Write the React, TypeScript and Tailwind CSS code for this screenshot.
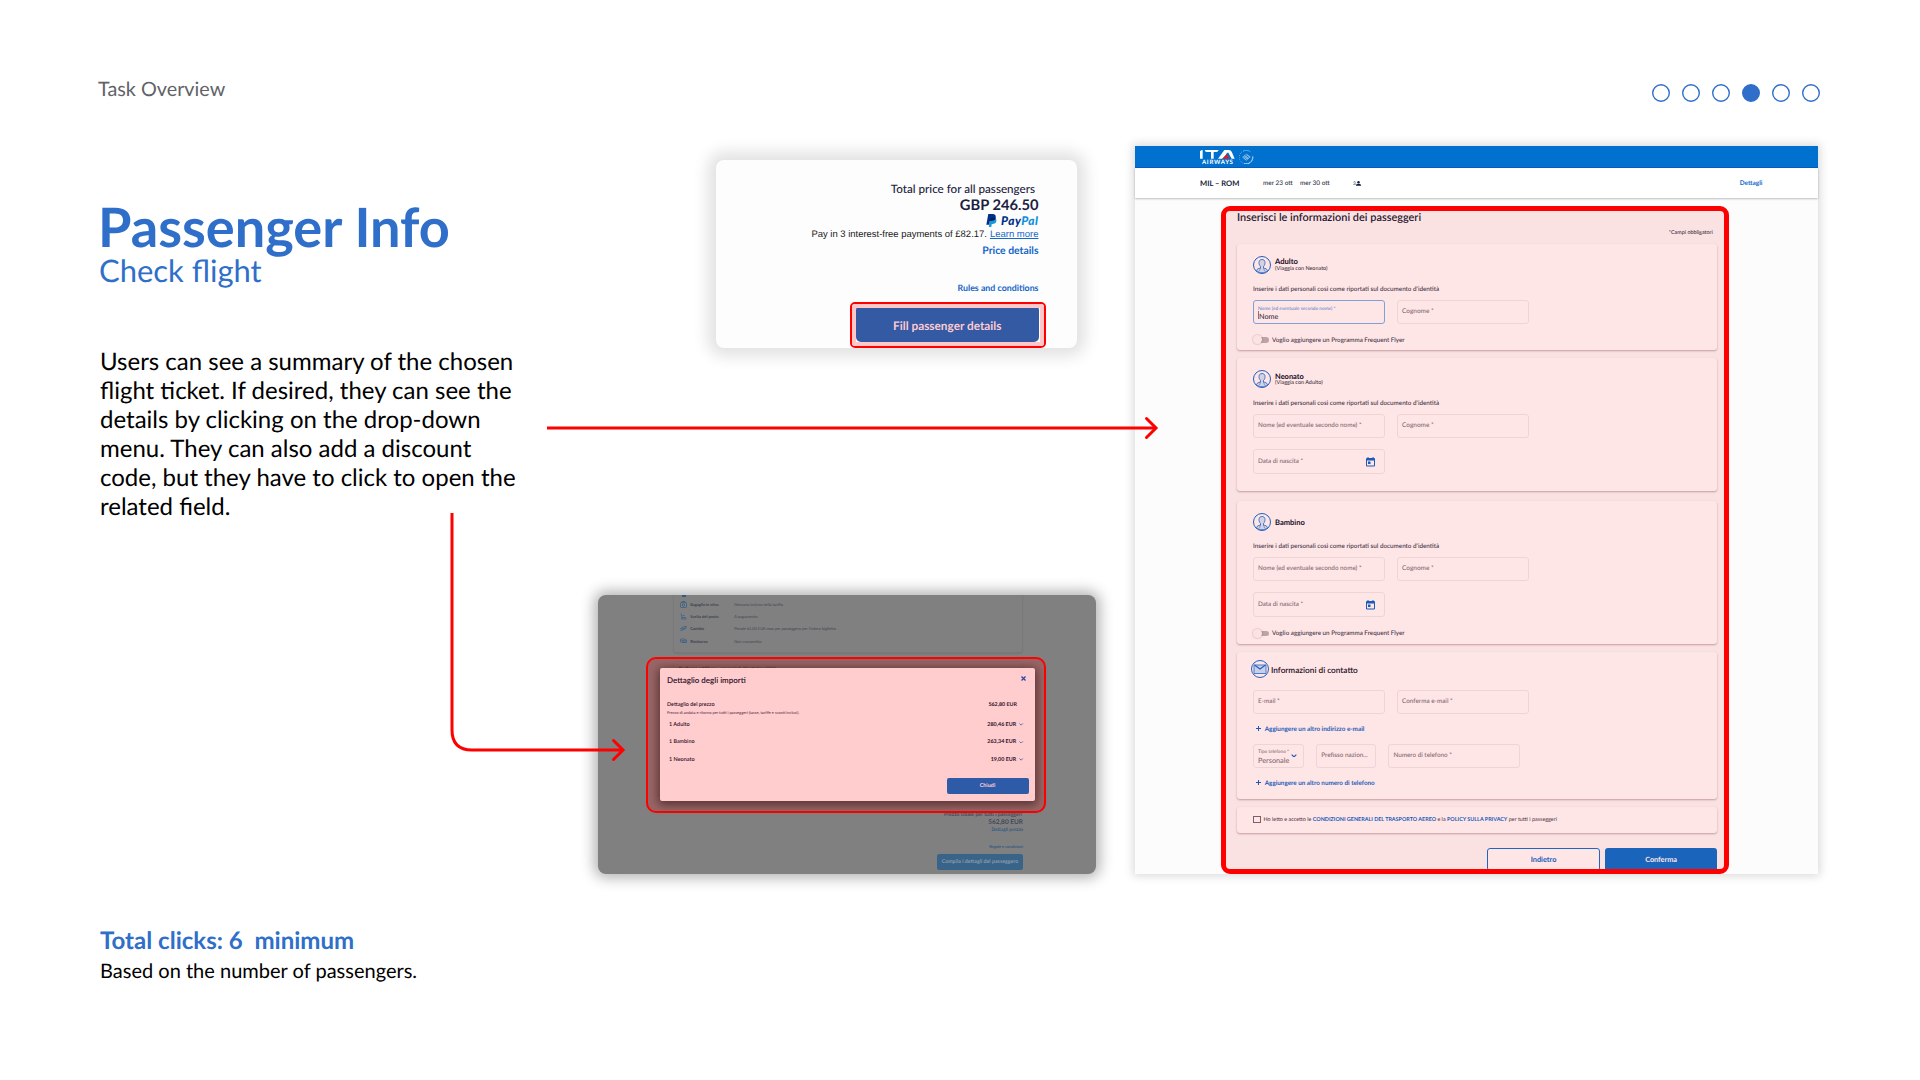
import { useLayoutEffect, useRef, useState } from "react";
import type { ReactNode } from "react";

/* Single line of text whose size is computed so that its glyphs span `w` pixels. */
function Fit({ w, className = "", children }: { w: number; className?: string; children: ReactNode }) {
  const ref = useRef<HTMLSpanElement>(null);
  const [size, setSize] = useState(100);
  useLayoutEffect(() => {
    const el = ref.current;
    if (!el) return;
    el.style.fontSize = "100px";
    const natural = el.getBoundingClientRect().width;
    const next = (w / (natural - 12)) * 100;
    el.style.fontSize = `${next}px`;
    setSize(next);
  }, [w]);
  return (
    <span ref={ref} className={`block w-max shrink-0 translate-y-px whitespace-pre leading-none ${className}`} style={{ fontSize: size }}>
      {children}
    </span>
  );
}

function Steps() {
  return (
    <div className="flex gap-3">
      {[1, 2, 3, 4, 5, 6].map((n) => (
        <svg key={n} viewBox="0 0 18 18" className="size-[18px]">
          <circle cx="9" cy="9" r="8.3" fill={n === 4 ? "#2f6fc9" : "none"} stroke="#2f6fc9" strokeWidth="1.4" />
        </svg>
      ))}
    </div>
  );
}

function PriceCard() {
  return (
    <section className="relative ml-[118px] mt-[14px] flex h-[188px] w-[361px] flex-col items-end rounded-[8px] bg-[#fdfdfd] pr-[38.5px] shadow-[0_0_16px_8px_rgba(0,0,0,0.12)]">
      <div className="mr-[3.5px] mt-[22px] flex h-[14px] items-center">
        <Fit w={143} className="font-medium text-[#1c2340]">Total price for all passengers</Fit>
      </div>
      <div className="flex h-[17px] items-center">
        <Fit w={77} className="font-bold text-[#1a2042]">GBP 246.50</Fit>
      </div>
      <div className="flex h-[14px] items-center gap-[4px]">
        <svg viewBox="0 0 20 24" className="h-[13px] w-[11px]">
          <path d="M8 7h6c4 0 5.5 2.500 5 6-.7 4-3.500 5.500-7 5.500h-1.500L9.500 24H5z" fill="#179bd7" />
          <path d="M4 0h8c4.500 0 6.500 2.500 5.800 6.500-.8 4.500-4 6-8 6H7L5.700 20H0.500z" fill="#003087" />
          <path d="M9 7h8.700c-.6 4-3.700 5.500-7.900 5.500H7z" fill="#001c64" />
        </svg>
        <Fit w={36} className="font-black italic tracking-[0.04em] text-[#003087]">
          Pay<span className="text-[#0e90dc]">Pal</span>
        </Fit>
      </div>
      <div className="flex h-[14px] items-center gap-[3px] font-['Liberation_Sans']">
        <Fit w={174.500} className="text-[#1a1a1a]">Pay in 3 interest-free payments of £82.17.</Fit>
        <Fit w={47.500} className="text-[#1769c9] underline underline-offset-[1px]">Learn more</Fit>
      </div>
      <div className="mt-[1px] flex h-[16px] items-center">
        <Fit w={55} className="font-bold text-[#1566c8]">Price details</Fit>
      </div>
      <div className="mt-[21.500px] flex h-[16px] items-center">
        <Fit w={80} className="font-bold text-[#1566c8]">Rules and conditions</Fit>
      </div>
      <div className="mt-[9.500px] flex h-[37px] w-[182.500px] items-center justify-center rounded-[5px] bg-[#355aa4] pt-[3px]">
        <Fit w={107} className="font-bold text-[#fbcbd2]">Fill passenger details</Fit>
      </div>
      <div className="absolute left-[134px] top-[142px] h-[46px] w-[196px] rounded-[5px] border-2 border-[#ff0000]">
        <div className="h-full rounded-[3px] shadow-[inset_0_0_0_4px_#ffc8c8]" />
      </div>
    </section>
  );
}

const fareRules = [
  { label: "Bagaglio in stiva", lw: 28, value: "Nessuno incluso nella tariffa", vw: 48.500, icon: <><rect x="1" y="3" width="12" height="10" rx="1.500" /><path d="M4.500 3V1h5v2" /><circle cx="7" cy="8" r="2.500" /></> },
  { label: "Scelta del posto", lw: 28, value: "A pagamento", vw: 23, icon: <><path d="M2 1l2 8h7l1 4M4 9l-1 3h8M5 5h4" /></> },
  { label: "Cambio", lw: 13.500, value: "Penale 65,00 EUR max per passeggero per l'intero biglietto", vw: 101.500, icon: <><path d="M1 8l4-4 8-1-4 4zM1 11l4-1 8-4" /></> },
  { label: "Rimborso", lw: 17, value: "Non consentito", vw: 27, icon: <><rect x="1" y="4" width="9" height="6" rx="1" /><path d="M10 6h3v5H4M3 7h5" /></> },
];

const fares = [
  { label: "1 Adulto", lw: 20, amount: "280,46 EUR", aw: 28.300 },
  { label: "1 Bambino", lw: 25, amount: "263,34 EUR", aw: 28.300 },
  { label: "1 Neonato", lw: 25, amount: "19,00 EUR", aw: 25 },
];

function Chevron({ className }: { className: string }) {
  return (
    <svg viewBox="0 0 10 6" className={className} fill="none" stroke="currentColor" strokeWidth="2">
      <path d="M1 1l4 4 4-4" />
    </svg>
  );
}

function AmountDialog() {
  return (
    <div className="absolute left-[62px] top-[73px] flex h-[133px] w-[375px] flex-col rounded-[2px] bg-[#ffcdcd] pl-[7px] pr-[6.500px] text-[#2d0f2a] shadow-[0_2px_10px_2px_rgba(30,0,0,0.5)]">
      <div className="mt-[5px] flex h-[11px] items-center justify-between pr-[2.500px]">
        <Fit w={78} className="font-semibold">Dettaglio degli importi</Fit>
        <svg viewBox="0 0 10 10" className="size-[5px]" fill="none" stroke="#2347a5" strokeWidth="2.400">
          <path d="M1 1l8 8M9 1l-8 8" />
        </svg>
      </div>
      <div className="mt-[16.500px] flex h-[8px] items-center justify-between pr-[11.500px]">
        <Fit w={47} className="font-semibold">Dettaglio del prezzo</Fit>
        <Fit w={28} className="font-bold">562,80 EUR</Fit>
      </div>
      <div className="-mt-[0.500px] flex h-[8px] items-center">
        <Fit w={132} className="font-medium text-[#5c3550]">Prezzo di andata e ritorno per tutti i passeggeri (tasse, tariffe e sconti inclusi).</Fit>
      </div>
      <div className="-mt-[0.500px] flex flex-col">
        {fares.map((f) => (
          <div key={f.label} className="flex h-[17.700px] items-center pl-[2px] pr-[5px]">
            <Fit w={f.lw} className="font-semibold">{f.label}</Fit>
            <Fit w={f.aw} className="ml-auto font-bold">{f.amount}</Fit>
            <Chevron className="ml-[3px] h-[2.600px] w-[4.300px] text-[#3f63b5]" />
          </div>
        ))}
      </div>
      <div className="ml-auto mt-[9.500px] flex h-[16px] w-[82px] items-center justify-center rounded-[2px] bg-[#2e5ba8]">
        <Fit w={15} className="font-bold text-[#ffcdd6]">Chiudi</Fit>
      </div>
    </div>
  );
}

function DialogCard() {
  return (
    <section className="relative mt-[247px] flex h-[279px] w-[498px] flex-col rounded-[8px] bg-[#808080] pl-[74.700px] pr-[73px] shadow-[0_0_14px_4px_rgba(0,0,0,0.3)]">
      <div className="flex h-[58px] w-[350px] flex-col rounded-b-[3px] border-x border-b border-[#7a7a7a] pl-[6.500px] pt-[3px] shadow-[0_1px_1px_#767676]">
        <div className="absolute left-[84px] top-0 h-[1.500px] w-[4px] bg-[#2f5d88]" />
        {fareRules.map((r) => (
          <div key={r.label} className="flex h-[12.200px] items-center">
            <svg viewBox="0 0 14 14" className="size-[7px]" fill="none" stroke="#24588a" strokeWidth="1.200">{r.icon}</svg>
            <div className="ml-[3px] w-[44px]">
              <Fit w={r.lw} className="font-bold text-[#3c4252]">{r.label}</Fit>
            </div>
            <Fit w={r.vw} className="font-medium text-[#484c56]">{r.value}</Fit>
          </div>
        ))}
      </div>
      <div className="mt-[8px] flex h-[12px] w-[350px] rounded-t-[3px] border-x border-t border-[#7a7a7a] pl-[5px] pt-[3px]">
        <Fit w={97} className="font-medium text-[#30303f]"><b>Da Roma a Milano</b> – mercoledì 30 ottobre 2024</Fit>
      </div>
      <div className="mt-[138.500px] flex flex-col items-end">
        <div className="mr-[1px] flex h-[7px] items-center"><Fit w={77.500} className="font-medium text-[#3b4050]">Prezzo totale per tutti i passeggeri</Fit></div>
        <div className="flex h-[7px] items-center"><Fit w={34} className="font-semibold text-[#3b4050]">562,80 EUR</Fit></div>
        <div className="flex h-[7px] items-center"><Fit w={31} className="font-semibold text-[#2a5580]">Dettagli prezzo</Fit></div>
        <div className="mt-[9px] flex h-[8px] items-center"><Fit w={33.500} className="font-semibold text-[#2a5580]">Regole e condizioni</Fit></div>
        <div className="mt-[4.500px] flex h-[16px] w-[86px] items-center justify-center rounded-[2px] bg-[#386489]">
          <Fit w={76} className="font-bold text-[#8a9ba8]">Compila i dettagli del passeggero</Fit>
        </div>
      </div>
      <div className="absolute left-[48px] top-[62px] h-[156px] w-[400px] rounded-[10px] border-2 border-[#ff0000] bg-[#ff0000]/20" />
      <AmountDialog />
    </section>
  );
}

function Avatar() {
  return (
    <svg viewBox="0 0 36 36" className="size-[18px] shrink-0" fill="none" stroke="#1f5fbf">
      <circle cx="18" cy="18" r="17" strokeWidth="2" />
      <path d="M7 29c1-3 4-4 8-5v-3c-2-2-3-5-3-8 0-4 2.500-6 6-6s6 2 6 6c0 3-1 6-3 8v3c4 1 7 2 8 5-6 6-16 6-22 0z" fill="#d5d3e2" strokeWidth="1.600" />
      <path d="M15 24l-2 6M21 24l2 6" strokeWidth="1" />
    </svg>
  );
}

function Person({ name, w, note, nw = 0 }: { name: string; w: number; note?: string; nw?: number }) {
  return (
    <div className="mt-[12.300px] flex h-[18px] items-center gap-[4px]">
      <Avatar />
      <div className="flex flex-col">
        <div className="flex h-[7.500px] items-center"><Fit w={w} className="font-bold text-[#160a1e]">{name}</Fit></div>
        {note && <div className="flex h-[7px] items-center"><Fit w={nw} className="font-medium text-[#3d2f40]">{note}</Fit></div>}
      </div>
    </div>
  );
}

function Hint() {
  return (
    <div className="mt-[10.500px] flex h-[10px] items-center">
      <Fit w={186} className="font-medium text-[#402f44]">Inserire i dati personali così come riportati sul documento d'identità</Fit>
    </div>
  );
}

function Field({ label, w, width = "w-[131.700px]" }: { label: string; w: number; width?: string }) {
  return (
    <div className={`flex h-[24px] items-center rounded-[3px] border border-[#efd4d6] pb-[1px] pl-[4px] ${width}`}>
      <Fit w={w} className="font-medium text-[#846672]">{label}</Fit>
    </div>
  );
}

function DateField() {
  return (
    <div className="mt-[11px] flex h-[25.300px] w-[131.700px] items-center justify-between rounded-[3px] border border-[#efd4d6] pl-[4px] pr-[8.500px]">
      <Fit w={44.500} className="font-medium text-[#846672]">Data di nascita *</Fit>
      <svg viewBox="0 0 18 20" className="h-[10px] w-[9px]" fill="#1a5bb8">
        <path fillRule="evenodd" d="M3 0h2v2h8V0h2v2h1a2 2 0 0 1 2 2v13a2 2 0 0 1-2 2H2a2 2 0 0 1-2-2V4a2 2 0 0 1 2-2h1zM2 7v10h14V7z" />
        <rect x="4" y="9" width="5" height="5" />
      </svg>
    </div>
  );
}

function FrequentFlyer({ className }: { className: string }) {
  return (
    <div className={`flex h-[10px] items-center ${className}`}>
      <span className="relative flex h-[9px] w-[16px] items-center">
        <span className="ml-[5px] h-[5.500px] w-[10.500px] rounded-full bg-[#bba4a6]" />
        <span className="absolute left-0 top-0 size-[9px] rounded-full bg-[#fbe3e3] shadow-[0_0_1px_1px_rgba(120,50,50,0.15)]" />
      </span>
      <Fit w={132} className="ml-[3px] font-medium text-[#402f44]">Voglio aggiungere un Programma Frequent Flyer</Fit>
    </div>
  );
}

const panelCard = "flex flex-col rounded-[3px] bg-[#ffe6e6] pl-[16px] shadow-[0_1px_2px_rgba(110,40,40,0.38)]";

function AddLink({ label, w, className }: { label: string; w: number; className: string }) {
  return (
    <div className={`flex h-[10px] items-center pl-[3px] ${className}`}>
      <svg viewBox="0 0 10 10" className="size-[5px]" stroke="#1a5bb8" strokeWidth="2"><path d="M5 0v10M0 5h10" /></svg>
      <Fit w={w} className="ml-[3.700px] font-bold text-[#1a5bb8]">{label}</Fit>
    </div>
  );
}

function BookingPanel() {
  return (
    <section className="relative h-[728px] w-[683px] bg-[#fcfcfc] shadow-[0_0_9px_2px_rgba(0,0,0,0.15)]">
      <div className="flex h-[22px] border-b border-[#0a5cc0] bg-[#0071ce] pl-[65.300px]">
        <div className="flex w-[35px] flex-col items-center pt-[4px]">
          <svg viewBox="0 0 104 26" className="h-[8.700px] w-[34.700px]" fill="#fff">
            <path d="M0 4q3-4 8-4v26H0zM14 0h42q-2 6-7 6h-8v20h-8V6H20q-5 0-6-6zM73 0h14q5 0 8 5l9 21h-9L85 8h-4l-6 10-8 8H54z" />
            <path d="M66 26l15-14 8 14z" fill="#d3202c" />
          </svg>
          <Fit w={31} className="mt-[0.500px] font-bold tracking-[0.120em] text-white">AIRWAYS</Fit>
        </div>
        <svg viewBox="0 0 44 44" className="ml-[4px] mt-[3.500px] size-[14.500px]" fill="none" stroke="#d7eafa">
          <path d="M14 3a20 20 0 1 0 26 13" strokeWidth="2" strokeDasharray="2 4" />
          <path d="M14 3a20 20 0 0 1 20 2" strokeWidth="2.500" strokeDasharray="3 3" />
          <path d="M42 20a20 20 0 0 1-26 21" strokeWidth="2.500" />
          <path d="M11 22l12-9 11 8-12 10zM15 25l12-9M19 28l12-9M16 18l11 9" strokeWidth="1.800" />
        </svg>
      </div>
      <div className="flex h-[30px] items-center bg-white pl-[65px] shadow-[0_1px_2px_rgba(0,0,0,0.25)]">
        <div className="w-[63px]"><Fit w={38.500} className="font-bold text-[#161c3a]">MIL – ROM</Fit></div>
        <div className="w-[37px]"><Fit w={29} className="font-medium text-[#2b3045]">mer 23 ott</Fit></div>
        <div className="w-[53px]"><Fit w={29} className="font-medium text-[#2b3045]">mer 30 ott</Fit></div>
        <Fit w={2.200} className="font-medium text-[#2b3045]">3</Fit>
        <svg viewBox="0 0 10 10" className="ml-[0.500px] size-[5px]" fill="#161c3a"><circle cx="5" cy="2.600" r="2.400" /><path d="M0 9.500V8q1-2.500 5-2.500T10 8v1.500z" /></svg>
        <div className="ml-auto pr-[55.500px]"><Fit w={22} className="font-bold text-[#0f6ac8]">Dettagli</Fit></div>
      </div>

      <div className="ml-[86px] mt-[8px] h-[668px] w-[508px] overflow-hidden rounded-[9px] border-[5px] border-[#ff0000] bg-[#fae2e2] pl-[11px] pr-[6.700px]">
        <div className="flex h-[13px] items-center"><Fit w={183} className="font-semibold text-[#2a1730]">Inserisci le informazioni dei passeggeri</Fit></div>
        <div className="mt-[3.500px] flex h-[10px] items-center justify-end pr-[4.500px]"><Fit w={43.500} className="font-medium text-[#3b2a3a]">*Campi obbligatori</Fit></div>

        <div className={`mt-[6px] h-[106.500px] ${panelCard}`}>
          <Person name="Adulto" w={22} note="(Viaggia con Neonato)" nw={52} />
          <Hint />
          <div className="mt-[5.700px] flex gap-[12.300px]">
            <div className="flex h-[24px] w-[131.700px] flex-col justify-center rounded-[3px] border border-[#7f9fd6] pl-[4px]">
              <div className="flex h-[7px] items-center"><Fit w={77} className="font-medium text-[#5b82c8]">Nome (ed eventuale secondo nome) *</Fit></div>
              <div className="flex h-[8px] items-center border-l border-[#8a7484]"><Fit w={18.500} className="font-medium text-[#402f44]">Nome</Fit></div>
            </div>
            <Field label="Cognome *" w={31} />
          </div>
          <FrequentFlyer className="mt-[11px]" />
        </div>

        <div className={`mt-[7.500px] h-[133px] ${panelCard}`}>
          <Person name="Neonato" w={28} note="(Viaggia con Adulto)" nw={47} />
          <Hint />
          <div className="mt-[5.700px] flex gap-[12.300px]">
            <Field label="Nome (ed eventuale secondo nome) *" w={103} />
            <Field label="Cognome *" w={31} />
          </div>
          <DateField />
        </div>

        <div className={`mt-[10px] h-[143.500px] ${panelCard}`}>
          <Person name="Bambino" w={29} />
          <Hint />
          <div className="mt-[5.700px] flex gap-[12.300px]">
            <Field label="Nome (ed eventuale secondo nome) *" w={103} />
            <Field label="Cognome *" w={31} />
          </div>
          <DateField />
          <FrequentFlyer className="mt-[11px]" />
        </div>

        <div className={`mt-[8px] h-[147px] ${panelCard}`}>
          <div className="-ml-[2px] mt-[7.700px] flex h-[18px] items-center gap-[2px]">
            <svg viewBox="0 0 36 36" className="size-[18px]" fill="none" stroke="#1f5fbf" strokeWidth="2">
              <circle cx="18" cy="18" r="17" />
              <path d="M6 10h24v17H6z" fill="#c9cfe6" stroke="#4a7cc9" />
              <path d="M7 10l11 8 11-8" strokeWidth="2.200" />
            </svg>
            <Fit w={86} className="font-semibold text-[#1f0f28]">Informazioni di contatto</Fit>
          </div>
          <div className="mt-[12px] flex gap-[12.300px]">
            <Field label="E-mail *" w={21} />
            <Field label="Conferma e-mail *" w={50} />
          </div>
          <AddLink label="Aggiungere un altro indirizzo e-mail" w={99} className="mt-[10px]" />
          <div className="mt-[10px] flex gap-[12.500px]">
            <div className="flex h-[24px] w-[50.700px] items-center justify-between rounded-[3px] border border-[#efd4d6] pl-[4px] pr-[6px]">
              <div className="flex flex-col">
                <div className="flex h-[7px] items-center"><Fit w={30.500} className="font-medium text-[#846672]">Tipo telefono *</Fit></div>
                <div className="flex h-[8px] items-center"><Fit w={30.500} className="font-medium text-[#846672]">Personale</Fit></div>
              </div>
              <Chevron className="-ml-[1px] h-[3.500px] w-[6px] text-[#1a5bb8]" />
            </div>
            <Field label="Prefisso nazion..." w={46} width="w-[59.700px]" />
            <Field label="Numero di telefono *" w={58} />
          </div>
          <AddLink label="Aggiungere un altro numero di telefono" w={109.500} className="mt-[10px]" />
        </div>

        <div className={`mt-[7.500px] h-[26px] justify-center ${panelCard}`}>
          <div className="flex items-center gap-[3px]">
            <span className="size-[7.500px] border border-[#7d5f6c]" />
            <Fit w={293.500} className="font-medium text-[#56404f]">
              Ho letto e accetto le <b className="text-[#1a5bb8]">CONDIZIONI GENERALI DEL TRASPORTO AEREO</b> e la{" "}
              <b className="text-[#1a5bb8]">POLICY SULLA PRIVACY</b> per tutti i passeggeri
            </Fit>
          </div>
        </div>

        <div className="mt-[15px] flex justify-end gap-[5px]">
          <div className="flex h-[23px] w-[112.500px] items-center justify-center rounded-[3px] border border-[#1f66c0] bg-[#ffe6e6]">
            <Fit w={25} className="font-bold text-[#1a5bb8]">Indietro</Fit>
          </div>
          <div className="flex h-[23px] w-[112.500px] items-center justify-center rounded-[3px] bg-[#1a65bb]">
            <Fit w={31} className="font-bold text-[#ffe6ea]">Conferma</Fit>
          </div>
        </div>
      </div>
    </section>
  );
}

export default function App() {
  return (
    <main className="relative flex h-[1080px] w-[1920px] flex-col overflow-hidden bg-white font-['Lato',sans-serif] [text-rendering:geometricPrecision]">
      <header className="flex h-[146px] items-start justify-between pl-[98px] pr-[100px]">
        <Fit w={125} className="mt-[79px] text-[#5f6368]">Task Overview</Fit>
        <div className="mt-[84px]"><Steps /></div>
      </header>

      <div className="flex">
        <div className="flex w-[498px] flex-col pl-[100px]">
          <div className="-ml-[2px] mt-[54px] flex h-[52px] items-center">
            <Fit w={345.500} className="font-bold text-[#2f6fc9]">Passenger Info</Fit>
          </div>
          <div className="-ml-[1px] -mt-[1px] flex h-[36px] items-center">
            <Fit w={159} className="text-[#2f6fc9]">Check flight</Fit>
          </div>
          <p className="mt-[61px] whitespace-nowrap text-[24px] leading-[28.900px] text-black">
            Users can see a summary of the chosen<br />
            flight ticket. If desired, they can see the<br />
            details by clicking on the drop-down<br />
            menu. They can also add a discount<br />
            code, but they have to click to open the<br />
            related field.
          </p>
          <div className="mt-[405px] flex h-[28px] items-center">
            <Fit w={251.500} className="font-bold text-[#2f6fc9]">{"Total clicks: 6  minimum"}</Fit>
          </div>
          <div className="mt-[2px] flex h-[28px] items-center">
            <Fit w={315} className="text-black">Based on the number of passengers.</Fit>
          </div>
        </div>

        <div className="ml-[100px] w-[537px]">
          <PriceCard />
          <DialogCard />
        </div>

        <BookingPanel />
      </div>

      <svg className="pointer-events-none absolute left-0 top-0 h-[1080px] w-[1920px]" fill="none" stroke="#ff0000" strokeWidth="3">
        <path d="M547 428H1156" />
        <path d="M1146.500 418.500l9.500 9.500-9.500 9.500" strokeLinecap="round" />
        <path d="M452 513V730q0 20 20 20H623" />
        <path d="M613.500 740.500L623 750l-9.500 9.500" strokeLinecap="round" />
      </svg>
    </main>
  );
}
